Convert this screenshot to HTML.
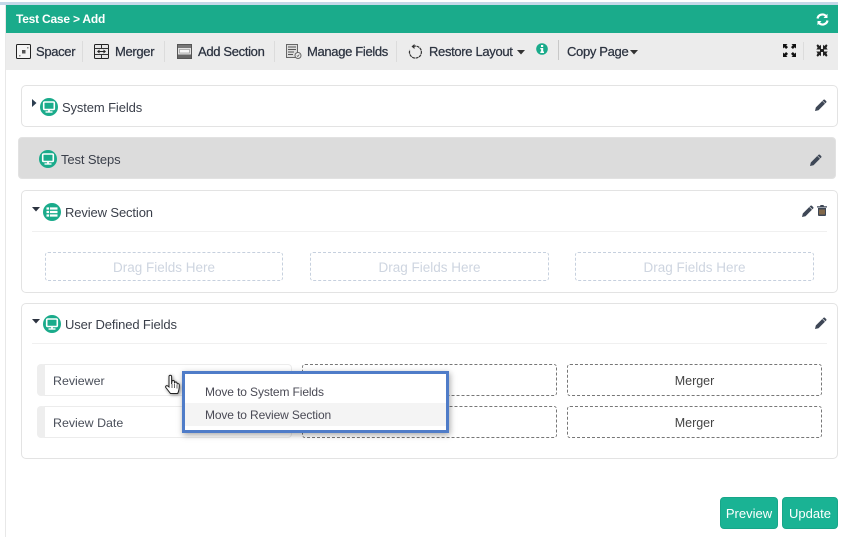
<!DOCTYPE html>
<html><head><meta charset="utf-8">
<style>
html,body{margin:0;padding:0;background:#fff;}
body{width:847px;height:537px;position:relative;overflow:hidden;font-family:"Liberation Sans",sans-serif;font-size:13px;color:#3a3f4a;}
.a{position:absolute;box-sizing:border-box;}
.t{position:absolute;white-space:nowrap;line-height:16px;letter-spacing:-.12px;}
.tb{font-weight:400;color:#2c3340;-webkit-text-stroke:.25px #2c3340;letter-spacing:-.33px;}
.card{position:absolute;box-sizing:border-box;background:#fff;border:1px solid #e3e3e3;border-radius:5px;}
.sep{position:absolute;width:1px;background:#dcdcdc;top:41px;height:21px;}
.drag{position:absolute;box-sizing:border-box;top:252px;height:29px;border:1px dashed #c6d0de;border-radius:3px;color:#ced5e0;text-align:center;line-height:29px;font-size:13.5px;}
.fld{position:absolute;box-sizing:border-box;left:37px;width:255px;height:32px;border:1px solid #ececec;border-left:8px solid #eee;border-radius:4px;line-height:32px;padding-left:8px;color:#4a4f5a;font-size:12.4px;}
.mrg{position:absolute;box-sizing:border-box;width:255px;height:32px;border:1px dashed #777;border-radius:3px;text-align:center;line-height:32px;color:#444;font-size:12.5px;}
.btn{position:absolute;box-sizing:border-box;top:497px;height:32px;background:#1ab394;border:1px solid #18a689;border-radius:4px;color:#fff;text-align:center;line-height:32px;font-size:13px;}
svg{position:absolute;overflow:visible;}
</style></head><body>

<div class="a" style="left:0;top:2px;width:838px;height:3px;background:#c5d8e8"></div>
<div class="a" style="left:5px;top:5px;width:1px;height:532px;background:#e8e8e8"></div>
<div class="a" style="left:6px;top:5px;width:832px;height:28px;background:#1aab8b"></div>
<div class="t" style="left:16px;top:11px;color:#fff;font-weight:700;font-size:12px;letter-spacing:-.22px">Test Case &gt; Add</div>
<svg style="left:816px;top:13px" width="13" height="13" viewBox="0 0 13 13"><path d="M1.500 5.500A5 5 0 0 1 10 3M11.500 7.500A5 5 0 0 1 3 10" fill="none" stroke="#fff" stroke-width="2.200"/><path d="M11.500 .8V5H7.500ZM1.500 12.200V8H5.500Z" fill="#fff"/></svg>

<div class="a" style="left:6px;top:33px;width:832px;height:37px;background:#ececec"></div>

<svg style="left:16px;top:44px" width="15" height="15" viewBox="0 0 15 15"><rect x=".5" y=".5" width="14" height="14" rx="1" fill="#f5f5f5" stroke="#222"/><rect x="6" y="6" width="3.500" height="3.500" fill="#555"/><path d="M11 3h1.500v1.500H11zM3 11h1.500v1.500H3z" fill="#888"/></svg>
<div class="t tb" style="left:36px;top:44px">Spacer</div>
<div class="sep" style="left:82px"></div>

<svg style="left:94px;top:44px" width="15" height="15" viewBox="0 0 15 15"><rect x=".5" y=".5" width="14" height="14" rx="1" fill="#e6e6e6" stroke="#222"/><path d="M.5 4.500h14M.5 10.500h14M7.500 .5v4M7.500 10.500v4" stroke="#333" fill="none"/><path d="M4 7.500h7" stroke="#222"/><path d="M3 7.500l2.500-2v4zM12 7.500l-2.500-2v4z" fill="#222"/></svg>
<div class="t tb" style="left:115px;top:44px">Merger</div>
<div class="sep" style="left:164px"></div>

<svg style="left:177px;top:44px" width="15" height="15" viewBox="0 0 15 15"><rect x=".5" y=".5" width="14" height="14" fill="#e2e2e2" stroke="#555"/><rect x="1" y="1" width="13" height="3" fill="#777"/><rect x="2.500" y="5.500" width="10" height="3.500" fill="#f6f6f6" stroke="#999" stroke-width=".7"/><rect x="1" y="10.500" width="13" height="3.500" fill="#666"/></svg>
<div class="t tb" style="left:198px;top:44px">Add Section</div>
<div class="sep" style="left:274px"></div>

<svg style="left:286px;top:44px" width="16" height="15" viewBox="0 0 16 15"><rect x=".5" y=".5" width="11" height="13" fill="#ddd" stroke="#666"/><path d="M2 3h8M2 5.500h8M2 8h6M2 10.500h5" stroke="#555"/><circle cx="12" cy="11.500" r="3" fill="#eee" stroke="#666"/><path d="M10.800 11.500l1 1 1.500-2" stroke="#666" fill="none" stroke-width=".8"/></svg>
<div class="t tb" style="left:307px;top:44px">Manage Fields</div>
<div class="sep" style="left:396px"></div>

<svg style="left:408px;top:44px" width="15" height="15" viewBox="0 0 15 15"><path d="M5 2.600A6 6 0 1 1 1.800 6" fill="none" stroke="#333" stroke-width="1.200" stroke-dasharray="3 .6"/><path d="M6.500 0v5L3.500 2.500z" fill="#333"/></svg>
<div class="t tb" style="left:429px;top:44px">Restore Layout</div>
<svg style="left:517px;top:50px" width="8" height="5"><path d="M0 0h8L4 4.500z" fill="#333"/></svg>
<svg style="left:536px;top:43px" width="12" height="12" viewBox="0 0 12 12"><circle cx="6" cy="6" r="5.800" fill="#1aab8b"/><rect x="5" y="2" width="2.200" height="2" fill="#fff"/><path d="M4.300 5h2.900v3.500h.8V10H4.300V8.500h.8V6.300h-.8z" fill="#fff"/></svg>
<div class="sep" style="left:558px;top:40px;height:20px;background:#c8c8c8"></div>
<div class="t tb" style="left:567px;top:44px">Copy Page</div>
<svg style="left:630px;top:50px" width="8" height="5"><path d="M0 0h8L4 4.500z" fill="#333"/></svg>

<svg style="left:783px;top:44px" width="13" height="13" viewBox="0 0 13 13" fill="#111"><path d="M0 0h4.500L3.200 1.300 5 3.100 3.100 5 1.300 3.200 0 4.500zM13 0v4.500L11.700 3.200 9.900 5 8 3.100 9.800 1.300 8.500 0zM0 13V8.500L1.300 9.800 3.100 8 5 9.900 3.200 11.700 4.500 13zM13 13H8.500L9.800 11.700 8 9.900 9.900 8 11.700 9.800 13 8.500z"/></svg>
<div class="sep" style="left:803px;top:42px;height:18px"></div>
<svg style="left:816px;top:44px" width="12" height="13" viewBox="0 0 12 13" fill="#222"><path d="M.5 1.500L1.800 .2 3.600 2 5 .8V5.500H.3L1.600 3.800zM11.500 1.500L10.200 .2 8.400 2 7 .8V5.500H11.700L10.400 3.800zM.5 11.500L1.800 12.800 3.600 11 5 12.200V7.500H.3L1.600 9.200zM11.500 11.500L10.200 12.800 8.400 11 7 12.200V7.500H11.700L10.400 9.200z"/><rect x="4" y="5" width="4" height="3"/></svg>

<!-- System Fields -->
<div class="card" style="left:21px;top:85px;width:817px;height:42px"></div>
<svg style="left:32px;top:99px" width="5" height="8"><path d="M0 0l4.500 4L0 8z" fill="#2c3e50"/></svg>
<svg style="left:40px;top:98px" width="18" height="18" viewBox="0 0 18 18"><circle cx="9" cy="9" r="9" fill="#1aab8b"/><rect x="3.700" y="4" width="10.600" height="7.500" rx="1" fill="#1aab8b" stroke="#fff" stroke-width="1.600"/><path d="M9 11.500v2.200" stroke="#fff" stroke-width="1.800"/><path d="M5.500 14h7" stroke="#fff" stroke-width="1.400"/></svg>
<div class="t" style="left:62px;top:100px">System Fields</div>
<svg style="left:815px;top:99px" width="12" height="12" viewBox="0 0 12 12"><path d="M0 12l.8-3.500L8.500 .8a1 1 0 0 1 1.400 0l1.300 1.300a1 1 0 0 1 0 1.400L3.500 11.200z" fill="#3e4756"/><path d="M7.500 1.800l2.700 2.700" stroke="#dcdcdc" stroke-width=".6"/></svg>

<!-- Test Steps -->
<div class="a" style="left:18px;top:137px;width:818px;height:42px;background:#dcdcdc;border:1px solid #e2e2e2;border-radius:4px"></div>
<svg style="left:39px;top:150px" width="18" height="18" viewBox="0 0 18 18"><circle cx="9" cy="9" r="9" fill="#1aab8b"/><rect x="3.700" y="4" width="10.600" height="7.500" rx="1" fill="#1aab8b" stroke="#fff" stroke-width="1.600"/><path d="M9 11.500v2.200" stroke="#fff" stroke-width="1.800"/><path d="M5.500 14h7" stroke="#fff" stroke-width="1.400"/></svg>
<div class="t" style="left:61px;top:152px">Test Steps</div>
<svg style="left:810px;top:154px" width="12" height="12" viewBox="0 0 12 12"><path d="M0 12l.8-3.500L8.500 .8a1 1 0 0 1 1.400 0l1.300 1.300a1 1 0 0 1 0 1.400L3.500 11.200z" fill="#3e4756"/><path d="M7.500 1.800l2.700 2.700" stroke="#dcdcdc" stroke-width=".6"/></svg>

<!-- Review Section -->
<div class="card" style="left:21px;top:190px;width:817px;height:103px"></div>
<div class="a" style="left:32px;top:231px;width:795px;height:1px;background:#f0f0f0"></div>
<svg style="left:32px;top:207px" width="8" height="5"><path d="M0 0h8L4 4.500z" fill="#2c3340"/></svg>
<svg style="left:43px;top:203px" width="18" height="18" viewBox="0 0 18 18"><circle cx="9" cy="9" r="9" fill="#1aab8b"/><path d="M3.500 5.500h11M3.500 9h11M3.500 12.500h11" stroke="#fff" stroke-width="2.200"/><path d="M6.500 4v10" stroke="#1aab8b" stroke-width=".9"/></svg>
<div class="t" style="left:65px;top:205px">Review Section</div>
<svg style="left:802px;top:205px" width="12" height="12" viewBox="0 0 12 12"><path d="M0 12l.8-3.500L8.500 .8a1 1 0 0 1 1.400 0l1.300 1.300a1 1 0 0 1 0 1.400L3.500 11.200z" fill="#3e4756"/><path d="M7.500 1.800l2.700 2.700" stroke="#fff" stroke-width=".6"/></svg>
<svg style="left:817px;top:205px" width="10" height="11" viewBox="0 0 10 11"><path d="M3.500 0h3l.5 1.200H10v1.300H0V1.200h3zM1 3h8v7a1 1 0 0 1-1 1H2a1 1 0 0 1-1-1z" fill="#3e4756"/><path d="M3 4.500v5M5 4.500v5M7 4.500v5" stroke="#d4923c" stroke-width=".9"/></svg>
<div class="drag" style="left:45px;width:238px">Drag Fields Here</div>
<div class="drag" style="left:310px;width:239px">Drag Fields Here</div>
<div class="drag" style="left:575px;width:239px">Drag Fields Here</div>

<!-- User Defined -->
<div class="card" style="left:21px;top:303px;width:817px;height:156px"></div>
<div class="a" style="left:32px;top:343px;width:795px;height:1px;background:#f0f0f0"></div>
<svg style="left:32px;top:319px" width="8" height="5"><path d="M0 0h8L4 4.500z" fill="#2c3340"/></svg>
<svg style="left:43px;top:315px" width="18" height="18" viewBox="0 0 18 18"><circle cx="9" cy="9" r="9" fill="#1aab8b"/><rect x="3.700" y="4" width="10.600" height="7.500" rx="1" fill="#1aab8b" stroke="#fff" stroke-width="1.600"/><path d="M9 11.500v2.200" stroke="#fff" stroke-width="1.800"/><path d="M5.500 14h7" stroke="#fff" stroke-width="1.400"/></svg>
<div class="t" style="left:65px;top:317px">User Defined Fields</div>
<svg style="left:815px;top:317px" width="12" height="12" viewBox="0 0 12 12"><path d="M0 12l.8-3.500L8.500 .8a1 1 0 0 1 1.400 0l1.300 1.300a1 1 0 0 1 0 1.400L3.500 11.200z" fill="#3e4756"/><path d="M7.500 1.800l2.700 2.700" stroke="#fff" stroke-width=".6"/></svg>

<div class="fld" style="top:364px">Reviewer</div>
<div class="fld" style="top:406px">Review Date</div>
<div class="mrg" style="left:302px;top:364px"></div>
<div class="mrg" style="left:302px;top:406px"></div>
<div class="mrg" style="left:567px;top:364px">Merger</div>
<div class="mrg" style="left:567px;top:406px">Merger</div>

<!-- Popup -->
<div class="a" style="left:182px;top:371px;width:267px;height:62px;background:#fff;border:3px solid #4f7cc8;box-shadow:1px 2px 6px rgba(0,0,0,.35)"></div>
<div class="a" style="left:185px;top:403px;width:261px;height:23px;background:#f4f4f4"></div>
<div class="t" style="left:205px;top:384px;font-size:12px;color:#4a4a55">Move to System Fields</div>
<div class="t" style="left:205px;top:407px;font-size:12px;color:#4a4a55">Move to Review Section</div>

<!-- Cursor -->
<svg style="left:164px;top:374px;filter:drop-shadow(1.500px 1.500px 1.500px rgba(0,0,0,.45))" width="18" height="24" viewBox="0 0 18 24"><path d="M5 2.500a1.300 1.300 0 0 1 2.600 0V10l.4-2.500a1.200 1.200 0 0 1 2.400.3l.1 1.500.3-.8a1.200 1.200 0 0 1 2.200.5l.2 1 .4-.3c.9-.3 1.700.3 1.700 1.300 0 3.500-.5 6-1.600 8.500H6.500L1.800 13.500c-.7-1 .6-2.500 1.800-1.600L5 13z" fill="#fff" stroke="#222" stroke-width="1"/><path d="M8 10v4M10.500 10v4M13 11v3.500" stroke="#222" stroke-width=".7"/></svg>

<!-- Buttons -->
<div class="btn" style="left:720px;width:58px">Preview</div>
<div class="btn" style="left:782px;width:56px">Update</div>

</body></html>
